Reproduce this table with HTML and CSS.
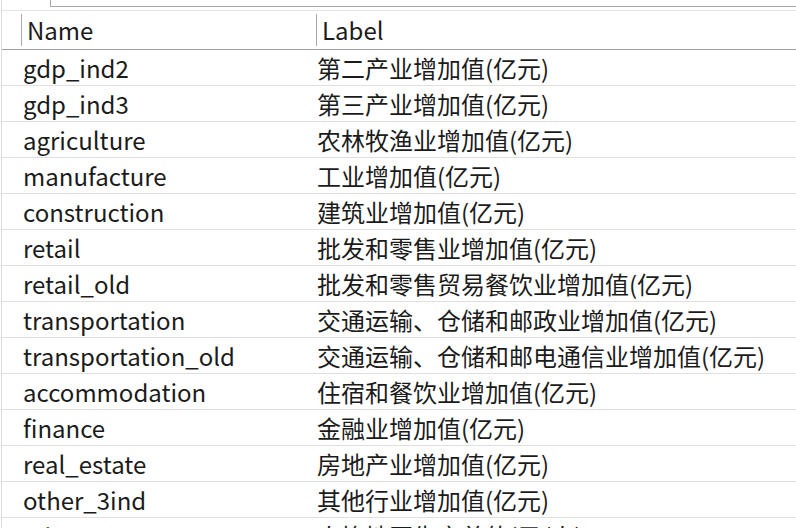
FILE: index.html
```html
<!DOCTYPE html>
<html>
<head>
<meta charset="utf-8">
<link rel="stylesheet" href="styles.css">
</head>
<body>
<div class="pane">
  <div class="topbar"><div class="topbox"></div></div>
  <div class="grid">
    <div class="hdr">
      <div class="hcell c1"><span class="sep"></span>Name</div>
      <div class="hcell c2"><span class="sep"></span>Label</div>
    </div>
    <div class="row"><div class="cell c1">gdp_ind2</div><div class="cell c2">第二产业增加值(亿元)</div></div>
    <div class="row"><div class="cell c1">gdp_ind3</div><div class="cell c2">第三产业增加值(亿元)</div></div>
    <div class="row"><div class="cell c1">agriculture</div><div class="cell c2">农林牧渔业增加值(亿元)</div></div>
    <div class="row"><div class="cell c1">manufacture</div><div class="cell c2">工业增加值(亿元)</div></div>
    <div class="row"><div class="cell c1">construction</div><div class="cell c2">建筑业增加值(亿元)</div></div>
    <div class="row"><div class="cell c1">retail</div><div class="cell c2">批发和零售业增加值(亿元)</div></div>
    <div class="row"><div class="cell c1">retail_old</div><div class="cell c2">批发和零售贸易餐饮业增加值(亿元)</div></div>
    <div class="row"><div class="cell c1">transportation</div><div class="cell c2">交通运输、仓储和邮政业增加值(亿元)</div></div>
    <div class="row"><div class="cell c1">transportation_old</div><div class="cell c2">交通运输、仓储和邮电通信业增加值(亿元)</div></div>
    <div class="row"><div class="cell c1">accommodation</div><div class="cell c2">住宿和餐饮业增加值(亿元)</div></div>
    <div class="row"><div class="cell c1">finance</div><div class="cell c2">金融业增加值(亿元)</div></div>
    <div class="row"><div class="cell c1">real_estate</div><div class="cell c2">房地产业增加值(亿元)</div></div>
    <div class="row"><div class="cell c1">other_3ind</div><div class="cell c2">其他行业增加值(亿元)</div></div>
    <div class="row"><div class="cell c1">gdp_pc</div><div class="cell c2">人均地区生产总值(元/人)</div></div>
  </div>
</div>
</body>
</html>
```
FILE: styles.css
```css
html, body {
  margin: 0;
  padding: 0;
  background: #ffffff;
  overflow: hidden;
}
body {
  width: 796px;
  height: 528px;
  font-family: "Noto Sans CJK SC", "Noto Sans", sans-serif;
  color: #1b1b1b;
}
.pane {
  height: 528px;
  border-left: 1px solid #dcdcdc;
  margin-left: 1px;
  overflow: hidden;
}
.topbar {
  border-bottom: 1px solid #e3e3e3;
  padding-left: 48px;
  box-sizing: border-box;
  height: 11px;
}
.topbox {
  height: 7px;
  border-left: 1px solid #a8a8a8;
  border-bottom: 1px solid #a8a8a8;
  box-sizing: border-box;
}
.grid {
  display: flex;
  flex-direction: column;
}
.hdr {
  display: flex;
  height: 38px;
  border-bottom: 1px solid #a0a0a0;
  align-items: center;
}
.hcell {
  display: flex;
  align-items: center;
  font-size: 24px;
  line-height: 1;
  height: 100%;
  box-sizing: border-box;
}
.sep {
  width: 1px;
  height: 32px;
  background: #a8a8a8;
  margin-right: 5px;
}
.hdr .c1 { width: 314px; padding-left: 19px; }
.hdr .c2 { flex: 1; }
.row {
  display: flex;
  flex: none;
  height: 36px;
  border-bottom: 1px solid #e0e0e0;
  box-sizing: border-box;
  align-items: center;
}
.cell {
  font-size: 24px;
  white-space: nowrap;
  line-height: 1;
}
.row .c1 { width: 294px; padding-left: 21px; }
.row .c2 { flex: 1; }
```
